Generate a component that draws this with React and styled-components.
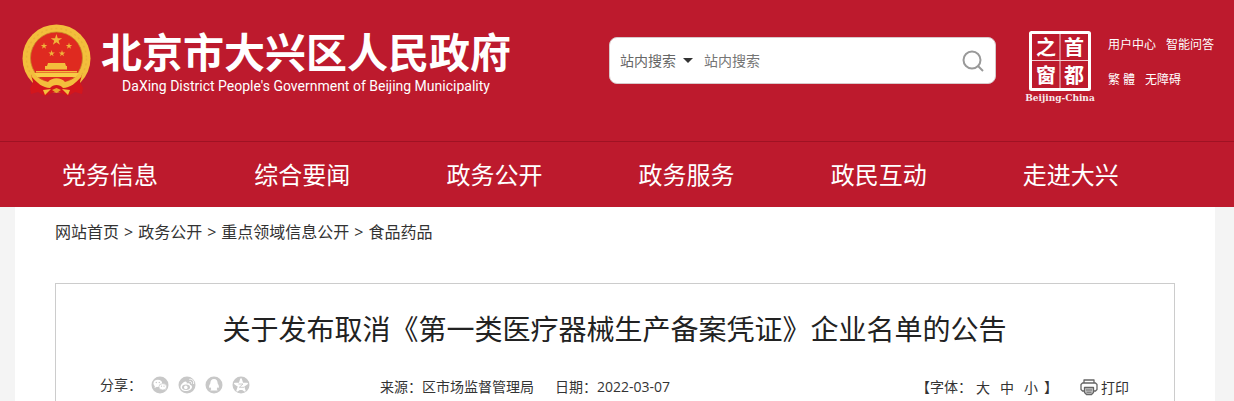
import React, { useState } from 'react'
import styled, { createGlobalStyle } from 'styled-components'

const GlobalStyle = createGlobalStyle`
    * {
        box-sizing: border-box;
    }
    body {
        margin: 0;
        background-color: #f4f4f4;
        color: #333333;
        font-family: "Open Sans", "Noto Sans CJK SC", sans-serif;
        font-size: 14px;
    }
    a {
        color: inherit;
        text-decoration: none;
    }
    button, input, select {
        font-family: inherit;
        color: inherit;
    }
`

const Page = styled.div`
    min-height: 100vh;
    display: flex;
    flex-direction: column;
`

const Header = styled.header`
    background-color: #bd1a2d;
    color: #ffffff;
`

const HeaderTop = styled.div`
    height: 141px;
    display: flex;
    align-items: flex-start;
    padding: 24px 20px 0 22px;
`

const Brand = styled.a`
    display: flex;
    gap: 10px;
`

const BrandText = styled.div`
    display: flex;
    flex-direction: column;
    align-items: center;
    gap: 2px;
    padding-top: 2px;
`

const SiteName = styled.h1`
    margin: 0;
    font-size: 41px;
    line-height: 48px;
    font-weight: 700;
    font-family: "Noto Sans CJK SC", sans-serif;
`

const SiteNameEn = styled.span`
    font-family: Roboto, sans-serif;
    font-size: 14px;
    line-height: 20px;
`

const Search = styled.form`
    display: flex;
    align-items: center;
    width: 387px;
    height: 47px;
    margin: 13px 29px 0 auto;
    padding: 0 11px 0 10px;
    border: 1px solid #d8c8ca;
    border-radius: 8px;
    background-color: #ffffff;
    color: #666666;
`

const ScopeWrap = styled.label`
    display: flex;
    align-items: center;
    margin-right: 11px;
`

const Scope = styled.select`
    appearance: none;
    width: 63px;
    padding: 0;
    border: 0;
    background: none;
    font-size: 14px;
`

const Caret = styled.span`
    border: 5px solid transparent;
    border-top-color: #333333;
    border-bottom: 0;
    pointer-events: none;
`

const Keyword = styled.input`
    flex: 1;
    min-width: 0;
    padding: 0;
    border: 0;
    outline: none;
    font-size: 14px;

    &::placeholder {
        color: #757575;
    }
`

const SearchButton = styled.button`
    display: flex;
    padding: 0;
    border: 0;
    background: none;
    cursor: pointer;
`

const SealLink = styled.a`
    display: flex;
    padding-top: 6px;
`

const TopLinks = styled.div`
    display: grid;
    gap: 19px;
    margin-left: 13px;
    padding-top: 13px;
    font-size: 12px;
    line-height: 16px;
`

const TopLinkRow = styled.div`
    display: flex;
    gap: 10px;
    white-space: pre;
`

const Nav = styled.nav`
    border-top: 1px solid #9f1223;
    padding: 0 19px 0 14px;
`

const NavList = styled.ul`
    display: grid;
    grid-template-columns: repeat(6, 16%);
    margin: 0;
    padding: 0;
    list-style: none;
`

const NavLink = styled.a`
    display: block;
    font-size: 24px;
    line-height: 65px;
    text-align: center;
`

const Main = styled.main`
    flex: 1;
    display: flex;
    flex-direction: column;
    margin: 0 19px 0 15px;
    padding: 0 40px;
    background-color: #ffffff;
`

const Breadcrumb = styled.nav`
    display: flex;
    gap: 5px;
    padding: 14px 0 40px;
    font-size: 16px;
    line-height: 22px;
`

const Article = styled.article`
    flex: 1;
    border: 1px solid #cccccc;
    border-bottom: 0;
    padding: 25px 45px 0 44px;
`

const Title = styled.h2`
    margin: 0;
    font-size: 28px;
    line-height: 40px;
    font-weight: 400;
    text-align: center;
    color: #222222;
`

const Meta = styled.div`
    display: flex;
    align-items: center;
    height: 32px;
    margin-top: 22px;
    line-height: 20px;
`

const Share = styled.div`
    display: flex;
    align-items: center;
    gap: 9px;
    margin-right: 130px;
    padding-bottom: 4px;
`

const ShareButton = styled.button`
    display: flex;
    padding: 0;
    border: 0;
    background: none;
    cursor: pointer;
`

const Source = styled.div`
    display: flex;
    gap: 21px;
`

const Tools = styled.div`
    display: flex;
    align-items: center;
    margin-left: auto;
`

const Sizes = styled.div`
    display: flex;
    gap: 10px;
    margin: 0 6px 0 4px;
`

const SizeButton = styled.button`
    padding: 0;
    border: 0;
    background: none;
    font-size: 14px;
    cursor: pointer;
`

const PrintButton = styled(SizeButton)`
    display: flex;
    align-items: center;
    gap: 3px;
    margin-left: 22px;
`

const STAR = '0,-1 0.225,-0.309 0.951,-0.309 0.363,0.118 0.588,0.809 0,0.382 -0.588,0.809 -0.363,0.118 -0.951,-0.309 -0.225,-0.309'

const Star = ({ x, y, r }) => (
    <polygon points={STAR} fill="#f0b53a" transform={`translate(${x} ${y}) scale(${r})`} />
)

function Emblem() {
    return (
        <svg width="69" height="73" viewBox="0 0 69 73" aria-hidden="true">
            <circle cx="34.5" cy="34.5" r="34" fill="#f3be3c" />
            <circle cx="34.5" cy="34.5" r="30" fill="none" stroke="#eab238" strokeWidth="1.5" strokeDasharray="2 3" />
            <circle cx="34.5" cy="34" r="26" fill="#df2a20" stroke="#c98a28" strokeWidth="0.8" />
            <Star x={34.4} y={16} r={6} />
            <Star x={22} y={22} r={3.4} />
            <Star x={47} y={22} r={3.4} />
            <Star x={29.6} y={29.5} r={3.4} />
            <Star x={40} y={29.5} r={3.4} />
            <path d="M26 39 H43 L44 42 H45 V45.5 H23 V42 H25 Z M14 47 H55 V48.5 H14 Z" fill="#f3be3c" />
            <path d="M12 49 H57 L54 53 H15 Z" fill="#f8cb45" />
            <path d="M9 51 L18 54 L26 60 L34.5 55 L43 60 L51 54 L60 51 L58 58 L61 64 L60 70 L53 68 L46 72 L34.5 67 L23 72 L16 68 L9 70 L8 64 L11 58 Z" fill="#d3161c" />
            <path d="M11 49 C16 54 21 57 26 58 C30 53 39 53 43 58 C48 57 53 54 58 49 L60 52 C54 59 48 64 41 64 C38 60 31 60 28 64 C21 64 15 59 9 52 Z" fill="#f3be3c" />
            <path d="M29 65 L23 71 L21 66 Z M40 65 L46 71 L48 66 Z" fill="#f3be3c" />
            <path d="M30 66 L34.500 64 L39 66 L34.500 69 Z" fill="#e8a52c" />
        </svg>
    )
}

function Seal() {
    return (
        <svg width="70" height="74" viewBox="0 0 70 74" fill="#ffffff" overflow="visible" role="img" aria-label="首都之窗">
            <rect x="5.5" y="2.5" width="59" height="57" rx="1" fill="none" stroke="#ffffff" strokeWidth="3" />
            <path d="M35 4 V59 M6 30.5 H64" stroke="#ffffff" strokeWidth="1" opacity="0.8" />
            <g fontFamily="Noto Sans CJK SC, sans-serif" fontSize="20" fontWeight="700" textAnchor="middle">
                <text x="21" y="25">之</text>
                <text x="49" y="25">首</text>
                <text x="21" y="53">窗</text>
                <text x="49" y="53">都</text>
            </g>
            <text x="35" y="71" fontFamily="DejaVu Serif, serif" fontSize="9" fontWeight="700" textAnchor="middle" opacity="0.9">Beijing-China</text>
        </svg>
    )
}

const navItems = ['党务信息', '综合要闻', '政务公开', '政务服务', '政民互动', '走进大兴']
const crumbs = ['网站首页', '政务公开', '重点领域信息公开', '食品药品']

const GREY = '#c8c8c8'

const shareItems = [
    {
        name: '微信',
        mark: (
            <>
                <ellipse cx="6.8" cy="7.3" rx="4.3" ry="3.6" />
                <path d="M4 9.500 L3.500 12 L6.500 10.500 Z M13 13 L14.500 14.500 L14.300 12 Z" />
                <ellipse cx="11.8" cy="10.8" rx="3.9" ry="3.2" stroke={GREY} strokeWidth="0.7" />
                <g fill={GREY}>
                    <circle cx="5.3" cy="6.5" r="0.7" />
                    <circle cx="8.3" cy="6.5" r="0.7" />
                    <circle cx="10.5" cy="10.2" r="0.6" />
                    <circle cx="13" cy="10.2" r="0.6" />
                </g>
            </>
        ),
    },
    {
        name: '微博',
        mark: (
            <>
                <path d="M7.500 5.500 C5 6 2.500 9 2.500 11 C2.500 13.500 5 15 8 15 C11 15 14 13.200 14 11 C14 9.700 13 9 12 8.800 C12.300 7.200 10.500 6.800 8.700 7.600 C9 6.500 8.700 5.500 7.500 5.500 Z" />
                <ellipse cx="8" cy="11.200" rx="4" ry="2.700" fill={GREY} />
                <circle cx="7.800" cy="11.400" r="1.800" />
                <path d="M11.500 5.500 C13 5.200 13.800 6.200 13.500 7.600 M11.300 3.300 C14.500 2.900 16.300 5.200 15.500 8" fill="none" stroke="#ffffff" strokeWidth="1" />
            </>
        ),
    },
    {
        name: 'QQ',
        mark: <path d="M9 3 C6.500 3 5.300 5 5.300 7.500 C4.200 9 3.800 10.500 4.300 12 L5.300 11.300 L6.300 13 L5.300 14.500 H12.700 L11.700 13 L12.700 11.300 L13.700 12 C14.200 10.500 13.800 9 12.700 7.500 C12.700 5 11.500 3 9 3 Z" />,
    },
    {
        name: 'QQ空间',
        mark: (
            <>
                <polygon points={STAR} transform="translate(9 9.5) scale(6.5)" strokeWidth="0.25" stroke="#ffffff" strokeLinejoin="round" />
                <path d="M6.500 8 H11 L7.300 11.300 H12" fill="none" stroke={GREY} strokeWidth="0.9" />
            </>
        ),
    },
]

function PrinterIcon() {
    return (
        <svg width="18" height="18" viewBox="0 0 18 18" fill="none" stroke="#666666" strokeWidth="1.3" strokeLinejoin="round">
            <path d="M4 5 V2 H14 V5" />
            <path d="M4 13 H2.500 L1 11.500 V6.500 L2.500 5 H15.500 L17 6.500 V11.500 L15.500 13 H14" />
            <path d="M4.500 9.500 H13.500 V14.500 L11.500 16.500 H6.500 L4.500 14.500 Z" fill="#cccccc" />
            <path d="M6 12 H12 M6.500 14.200 H11.500" strokeWidth="1" />
        </svg>
    )
}

function App() {
    const [fontSize, setFontSize] = useState('中')

    return (
        <Page>
            <GlobalStyle />
            <Header>
                <HeaderTop>
                    <Brand href="#">
                        <Emblem />
                        <BrandText>
                            <SiteName>北京市大兴区人民政府</SiteName>
                            <SiteNameEn>DaXing District People's Government of Beijing Municipality</SiteNameEn>
                        </BrandText>
                    </Brand>
                    <Search onSubmit={(e) => e.preventDefault()}>
                        <ScopeWrap>
                            <Scope aria-label="搜索范围">
                                <option>站内搜索</option>
                            </Scope>
                            <Caret />
                        </ScopeWrap>
                        <Keyword type="text" placeholder="站内搜索" aria-label="站内搜索" />
                        <SearchButton type="submit" aria-label="搜索">
                            <svg width="22" height="22" viewBox="0 0 22 22" fill="none" stroke="#999999" strokeWidth="2">
                                <circle cx="10" cy="10" r="8.5" />
                                <path d="M16 16 L21 21" />
                            </svg>
                        </SearchButton>
                    </Search>
                    <SealLink href="#">
                        <Seal />
                    </SealLink>
                    <TopLinks>
                        <TopLinkRow>
                            <a href="#">用户中心</a>
                            <a href="#">智能问答</a>
                        </TopLinkRow>
                        <TopLinkRow>
                            <a href="#">繁 體</a>
                            <a href="#">无障碍</a>
                        </TopLinkRow>
                    </TopLinks>
                </HeaderTop>
                <Nav>
                    <NavList>
                        {navItems.map((item) => (
                            <li key={item}><NavLink href="#">{item}</NavLink></li>
                        ))}
                    </NavList>
                </Nav>
            </Header>
            <Main>
                <Breadcrumb>
                    {crumbs.map((item, i) => (
                        <React.Fragment key={item}>
                            {i > 0 && <span>&gt;</span>}
                            <a href="#">{item}</a>
                        </React.Fragment>
                    ))}
                </Breadcrumb>
                <Article>
                    <Title>关于发布取消《第一类医疗器械生产备案凭证》企业名单的公告</Title>
                    <Meta>
                        <Share>
                            <span>分享：</span>
                            {shareItems.map(({ name, mark }) => (
                                <ShareButton key={name} type="button" aria-label={name}>
                                    <svg width="18" height="18" viewBox="0 0 18 18" fill="#ffffff">
                                        <circle cx="9" cy="9" r="8.5" fill={GREY} />
                                        {mark}
                                    </svg>
                                </ShareButton>
                            ))}
                        </Share>
                        <Source>
                            <span>来源：区市场监督管理局</span>
                            <span>日期：2022-03-07</span>
                        </Source>
                        <Tools>
                            <span>【字体：</span>
                            <Sizes>
                                {['大', '中', '小'].map((size) => (
                                    <SizeButton
                                        key={size}
                                        type="button"
                                        aria-pressed={size === fontSize}
                                        onClick={() => setFontSize(size)}
                                    >
                                        {size}
                                    </SizeButton>
                                ))}
                            </Sizes>
                            <span>】</span>
                            <PrintButton type="button" onClick={() => window.print()}>
                                <PrinterIcon />
                                打印
                            </PrintButton>
                        </Tools>
                    </Meta>
                </Article>
            </Main>
        </Page>
    )
}

export default App
